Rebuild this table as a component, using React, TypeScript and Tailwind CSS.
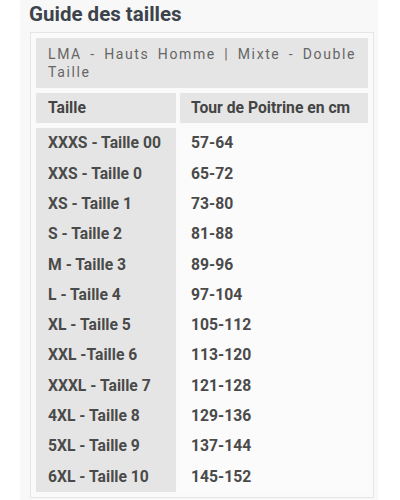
const ROWS: [string, string][] = [
  ["XXXS - Taille 00", "57-64"],
  ["XXS - Taille 0", "65-72"],
  ["XS - Taille 1", "73-80"],
  ["S - Taille 2", "81-88"],
  ["M - Taille 3", "89-96"],
  ["L - Taille 4", "97-104"],
  ["XL - Taille 5", "105-112"],
  ["XXL -Taille 6", "113-120"],
  ["XXXL - Taille 7", "121-128"],
  ["4XL - Taille 8", "129-136"],
  ["5XL - Taille 9", "137-144"],
  ["6XL - Taille 10", "145-152"],
];

export default function App() {
  return (
    <div className="h-[500px] w-[400px] overflow-hidden bg-white font-['Roboto',sans-serif]">
      <div className="ml-[20px] h-full w-[358px] bg-[#f8f8f8]">
        <h2 className="pl-[9px] pt-[1px] text-[20.5px] font-bold leading-[26px] text-[#3d434b]">
          Guide des tailles
        </h2>
        <div className="ml-[10px] mr-[4px] mt-[5px] border border-[#e6e6e6] bg-[#fafafa] p-[5px]">
          <div className="bg-[#e5e5e5] px-[12px] pt-[7px] pb-[7px] text-justify text-[14px] leading-[18px] tracking-[1.6px] text-[#666]">
            LMA - Hauts Homme | Mixte - Double Taille
          </div>
          <div className="mt-[5px] grid grid-cols-[140px_1fr] gap-x-[4px]">
            <div className="flex h-[30px] items-center bg-[#e5e5e5] pl-[12px] text-[15.7px] font-bold text-[#444]">
              Taille
            </div>
            <div className="flex h-[30px] items-center bg-[#e5e5e5] pl-[11px] text-[15.7px] font-bold text-[#444]">
              Tour de Poitrine en cm
            </div>
          </div>
          <div className="mt-[5px] grid grid-cols-[140px_1fr] gap-x-[2px]">
            {ROWS.map(([size, chest]) => (
              <div key={size} className="contents">
                <div className="flex h-[30.3px] items-center bg-[#e5e5e5] pl-[12px] text-[15.7px] font-bold text-[#4a4a4a]">
                  {size}
                </div>
                <div className="flex h-[30.3px] items-center bg-[#fbfbfb] pl-[13px] text-[15.7px] font-bold text-[#4a4a4a]">
                  {chest}
                </div>
              </div>
            ))}
          </div>
        </div>
      </div>
    </div>
  );
}
